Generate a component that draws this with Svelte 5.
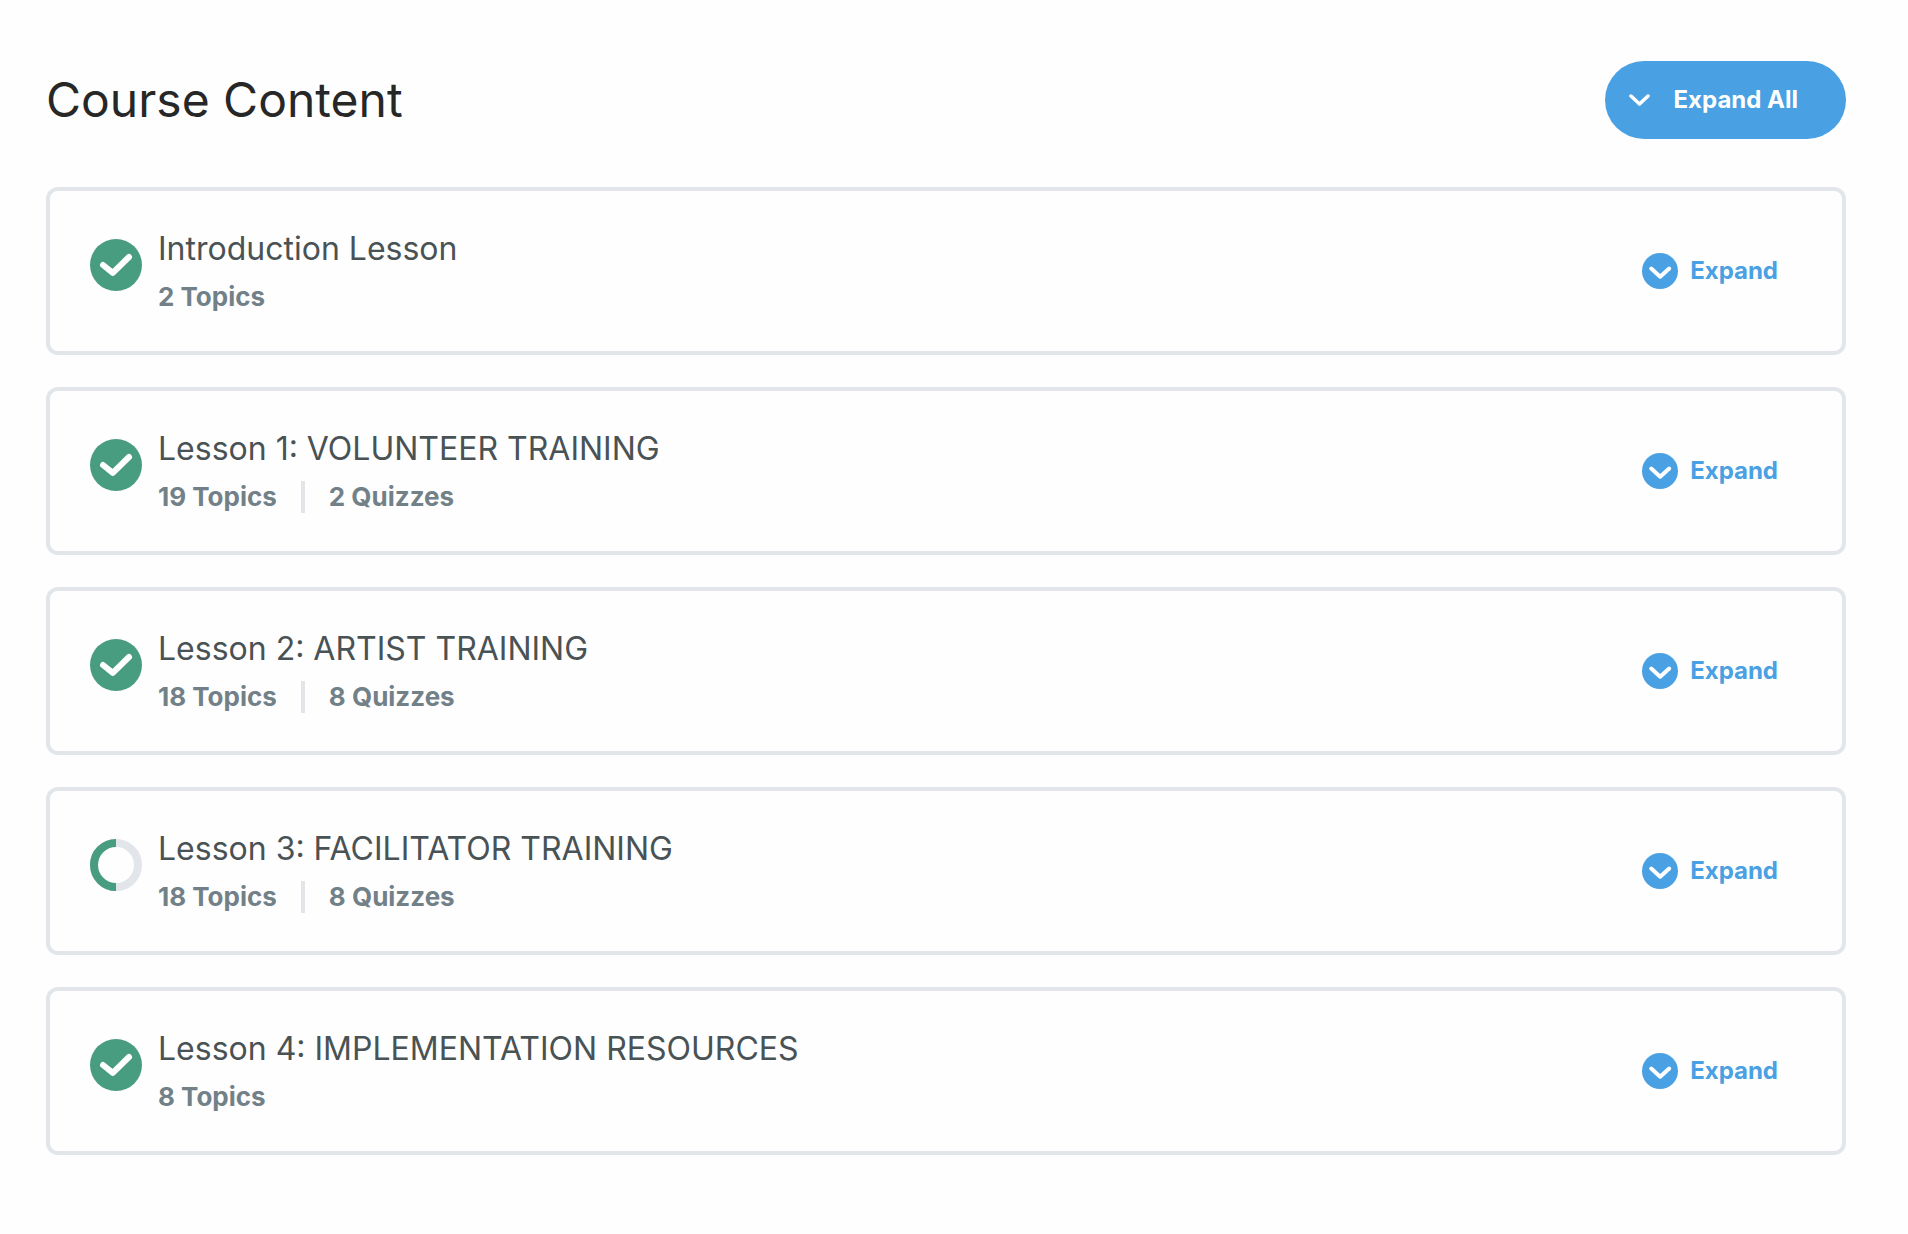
<script lang="ts">
  type Lesson = {
    id: string;
    title: string;
    topics: number;
    quizzes: number;
    status: 'complete' | 'in-progress';
  };

  const lessons: Lesson[] = [
    { id: 'intro', title: 'Introduction Lesson', topics: 2, quizzes: 0, status: 'complete' },
    { id: 'lesson-1', title: 'Lesson 1: VOLUNTEER TRAINING', topics: 19, quizzes: 2, status: 'complete' },
    { id: 'lesson-2', title: 'Lesson 2: ARTIST TRAINING', topics: 18, quizzes: 8, status: 'complete' },
    { id: 'lesson-3', title: 'Lesson 3: FACILITATOR TRAINING', topics: 18, quizzes: 8, status: 'in-progress' },
    { id: 'lesson-4', title: 'Lesson 4: IMPLEMENTATION RESOURCES', topics: 8, quizzes: 0, status: 'complete' },
  ];
</script>

<main class="course">
  <header class="course-head">
    <h2 class="course-title">Course Content</h2>
    <button class="expand-all" type="button">
      <svg class="expand-all-icon" viewBox="0 0 22 14" aria-hidden="true">
        <path d="M2 3 L10.5 11 L19 3" />
      </svg>
      Expand All
    </button>
  </header>

  <div class="lesson-list">
    {#each lessons as lesson (lesson.id)}
      <section class="lesson">
        <a class="lesson-link" href="#{lesson.id}">
          {#if lesson.status === 'complete'}
            <svg class="status" viewBox="0 0 52 52" aria-hidden="true">
              <circle class="status-fill" cx="26" cy="26" r="26" />
              <path class="status-check" d="M13 26 L22.8 33.8 L39 18" />
            </svg>
          {:else}
            <svg class="status" viewBox="0 0 52 52" aria-hidden="true">
              <circle class="status-track" cx="26" cy="26" r="22" />
              <path class="status-progress" d="M26 48 A22 22 0 0 1 26 4" />
            </svg>
          {/if}
          <span class="lesson-text">
            <span class="lesson-title">{lesson.title}</span>
            <span class="lesson-meta">
              <span>{lesson.topics} Topics</span>
              {#if lesson.quizzes > 0}
                <span class="separator"></span>
                <span>{lesson.quizzes} Quizzes</span>
              {/if}
            </span>
          </span>
        </a>
        <button class="expand" type="button">
          <svg class="expand-icon" viewBox="0 0 36 36" aria-hidden="true">
            <circle cx="18" cy="18" r="18" />
            <path d="M9.2 15.5 L18.2 23.7 L27.2 15.5" />
          </svg>
          Expand
        </button>
      </section>
    {/each}
  </div>
</main>

<style>
  :global(body) {
    background: #fefefe;
    font-family: Inter, 'Liberation Sans', sans-serif;
  }

  .course {
    padding: 61px 62px 78px 46px;
  }

  .course-head {
    display: flex;
    align-items: center;
    justify-content: space-between;
    margin-bottom: 48px;
  }

  .course-title {
    margin: 0;
    color: #272727;
    font-size: 48px;
    font-weight: 400;
    line-height: 60px;
  }

  button {
    display: flex;
    align-items: center;
    border: 0;
    font-family: inherit;
    font-size: 24px;
    font-weight: 700;
    line-height: 30px;
    cursor: pointer;
  }

  .expand-all {
    gap: 23px;
    padding: 24px 48px 24px 24px;
    border-radius: 40px;
    background: #49a1e3;
    color: #fff;
  }

  .expand-all-icon {
    width: 22px;
    height: 14px;
    fill: none;
    stroke: #fff;
    stroke-width: 3.5;
    stroke-linecap: round;
    stroke-linejoin: round;
  }

  .lesson-list {
    display: flex;
    flex-direction: column;
    gap: 32px;
  }

  .lesson {
    display: flex;
    align-items: center;
    justify-content: space-between;
    padding: 38px 64px 38px 40px;
    border: 4px solid #e2e6eb;
    border-radius: 12px;
  }

  .lesson-link {
    display: flex;
    align-items: flex-start;
    gap: 16px;
    color: #495255;
    text-decoration: none;
  }

  .status {
    flex: none;
    width: 52px;
    height: 52px;
    margin-top: 10px;
    fill: none;
  }

  .status-fill {
    fill: #489c7f;
  }

  .status-check {
    stroke: #fff;
    stroke-width: 6;
    stroke-linecap: round;
    stroke-linejoin: round;
  }

  .status-track {
    stroke: #e2e6eb;
    stroke-width: 8;
  }

  .status-progress {
    stroke: #489c7f;
    stroke-width: 8;
  }

  .lesson-text {
    display: flex;
    flex-direction: column;
    gap: 12px;
  }

  .lesson-title {
    font-size: 32px;
    line-height: 40px;
  }

  .lesson-meta {
    display: flex;
    gap: 24px;
    color: #728188;
    font-size: 26px;
    font-weight: 700;
    line-height: 32px;
  }

  .separator {
    width: 4px;
    background: #e2e6eb;
  }

  .expand {
    gap: 12px;
    padding: 0;
    background: none;
    color: #49a1e3;
  }

  .expand-icon {
    width: 36px;
    height: 36px;
    fill: #49a1e3;
  }

  .expand-icon path {
    fill: none;
    stroke: #fff;
    stroke-width: 4;
    stroke-linecap: round;
    stroke-linejoin: round;
  }
</style>
